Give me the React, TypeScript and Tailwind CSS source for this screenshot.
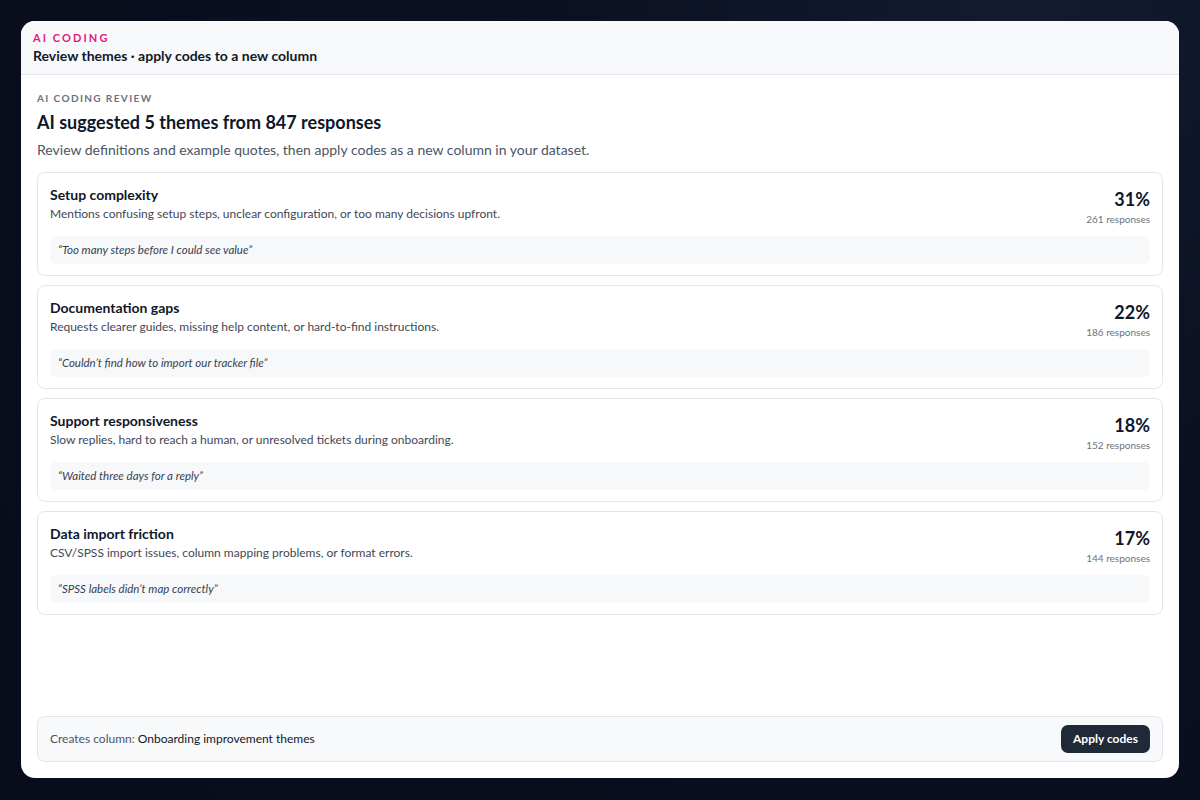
import React from 'react';

type Theme = {
  name: string;
  definition: string;
  quote: string;
  pct: number;
  count: number;
};

const themes: Theme[] = [
  {
    name: 'Setup complexity',
    definition: 'Mentions confusing setup steps, unclear configuration, or too many decisions upfront.',
    quote: '“Too many steps before I could see value”',
    pct: 31,
    count: 261,
  },
  {
    name: 'Documentation gaps',
    definition: 'Requests clearer guides, missing help content, or hard-to-find instructions.',
    quote: '“Couldn’t find how to import our tracker file”',
    pct: 22,
    count: 186,
  },
  {
    name: 'Support responsiveness',
    definition: 'Slow replies, hard to reach a human, or unresolved tickets during onboarding.',
    quote: '“Waited three days for a reply”',
    pct: 18,
    count: 152,
  },
  {
    name: 'Data import friction',
    definition: 'CSV/SPSS import issues, column mapping problems, or format errors.',
    quote: '“SPSS labels didn’t map correctly”',
    pct: 17,
    count: 144,
  },
];

function ThemeCard({ theme }: { theme: Theme }) {
  return (
    <div className="rounded-[8px] border border-[#e2e5ea] bg-white px-3 pt-[12px] pb-[11px]">
      <div className="flex items-start justify-between">
        <div>
          <h3 className="text-[14px] leading-[20px] font-bold text-[#0f172a]">{theme.name}</h3>
          <p className="mt-px text-[12px] leading-[16px] text-[#3f4756]">{theme.definition}</p>
        </div>
        <div className="text-right pt-[2px]">
          <div className="text-[18px] leading-[24px] font-bold text-[#0f172a]">{theme.pct}%</div>
          <div className="mt-[1px] text-[10px] leading-[14px] text-[#6b7280]">{theme.count} responses</div>
        </div>
      </div>
      <div className="mt-[10px] rounded-[6px] bg-[#f7f8fa] px-2 py-[6px] text-[11.5px] leading-[16px] italic text-[#374151]">
        {theme.quote}
      </div>
    </div>
  );
}

export default function App() {
  return (
    <div
      className="h-[800px] w-full p-[21px] pb-[22px] bg-[#0a0f1f] bg-[radial-gradient(circle_at_85%_0%,#141b30_0%,#0b1122_35%,#080c1a_100%)]"
      style={{ fontFamily: 'Lato, "Open Sans", "Noto Sans", sans-serif' }}
    >
      <div className="flex h-full flex-col overflow-hidden rounded-[14px] bg-white">
        <header className="border-b border-[#e3e6eb] bg-[#f8f9fb] px-3 pt-[9px] pb-[8px]">
          <div className="text-[11px] leading-[16px] font-bold tracking-[0.19em] text-[#e0197d]">AI CODING</div>
          <div className="text-[14px] leading-[20px] font-bold text-[#111827]">
            Review themes · apply codes to a new column
          </div>
        </header>

        <main className="flex flex-1 flex-col px-4 pt-4 pb-4">
          <div className="text-[10px] leading-[14px] font-bold tracking-[0.14em] text-[#6b7280]">AI CODING REVIEW</div>
          <h1 className="mt-[3px] text-[18px] leading-[28px] font-bold text-[#0f172a]">
            AI suggested 5 themes from 847 responses
          </h1>
          <p className="mt-1 text-[14px] leading-[20px] text-[#4b5563]">
            Review definitions and example quotes, then apply codes as a new column in your dataset.
          </p>

          <div className="mt-3 flex flex-col gap-[9px]">
            {themes.map((t) => (
              <ThemeCard key={t.name} theme={t} />
            ))}
          </div>

          <div className="mt-auto flex items-center justify-between rounded-[8px] border border-[#e2e5ea] bg-[#f8f9fb] px-3 py-[8px]">
            <div className="text-[12px] leading-[16px] text-[#4b5563]">
              Creates column: <span className="text-[#111827]">Onboarding improvement themes</span>
            </div>
            <button className="h-[28px] rounded-[7px] bg-[#1f2937] px-3 text-[12px] font-bold text-white">
              Apply codes
            </button>
          </div>
        </main>
      </div>
    </div>
  );
}
